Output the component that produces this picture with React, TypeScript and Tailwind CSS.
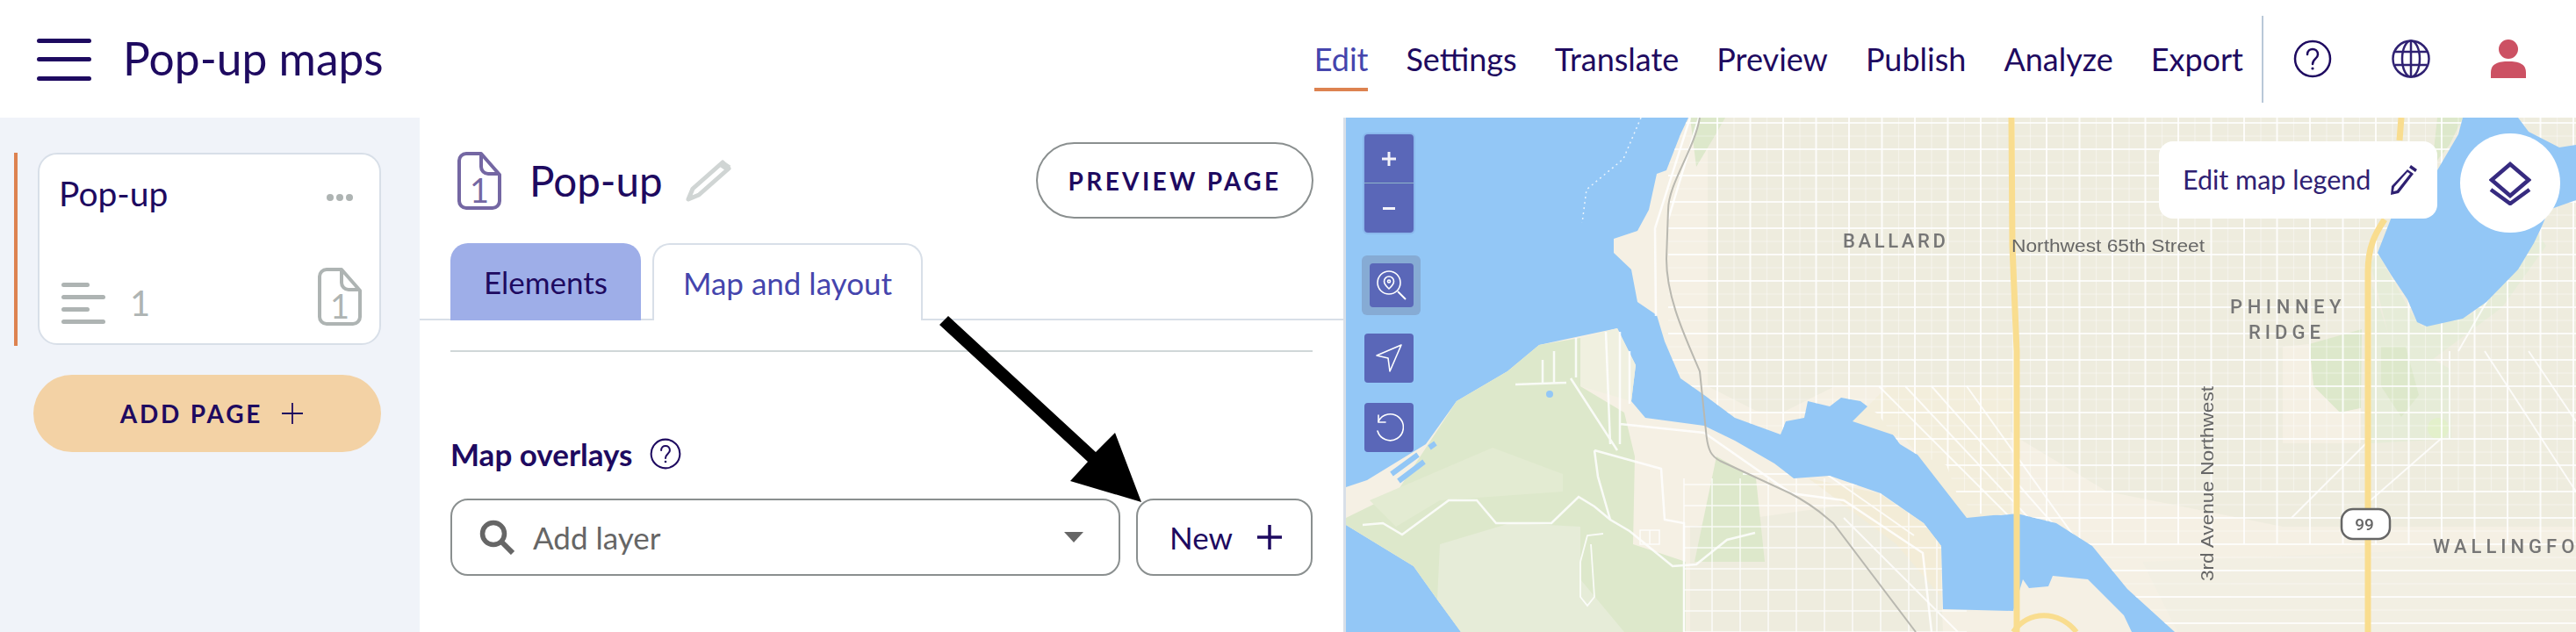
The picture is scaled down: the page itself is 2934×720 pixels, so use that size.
import React from "react";

const font = "font-['Lato','Open_Sans',sans-serif]";

const NAV = ["Settings", "Translate", "Preview", "Publish", "Analyze", "Export"];

function DocIcon({ className, color }: { className: string; color: string }) {
  return (
    <svg viewBox="0 0 50 66" className={`${className} overflow-visible`} fill="none" stroke={color} strokeWidth="4">
      <path d="M10 2h17l21 24v30a8 8 0 0 1-8 8H10a8 8 0 0 1-8-8V10a8 8 0 0 1 8-8z" strokeLinejoin="round" />
      <path d="M27 2v15a8 8 0 0 0 8 8h13" />
      <text x="25" y="58" textAnchor="middle" fontSize="38" fontFamily="Lato" fill={color} stroke="none">
        1
      </text>
    </svg>
  );
}

function HelpIcon({ className }: { className: string }) {
  return (
    <svg viewBox="0 0 44 44" className={className} fill="none" stroke="#1e0a60" strokeWidth="2.5">
      <circle cx="22" cy="22" r="20" />
      <path d="M16 17c0-4 3-6 6-6s6 2 6 6c0 5-6 5-6 11" strokeLinecap="round" />
      <circle cx="22" cy="33" r="1.6" fill="#1e0a60" stroke="none" />
    </svg>
  );
}

function MapSvg() {
  const north =
    "1923,134 1914,153 1898,194 1887,198 1878,239 1865,263 1838,272 1838,288 1858,307 1865,344 1887,359 1896,389 1914,431 1941,450 1976,476 2028,495 2034,480 2055,476 2059,457 2084,463 2097,453 2119,457 2139,472 2164,506 2182,517 2217,530 2230,566 2252,585 2279,587 2297,585 2342,596 2383,622 2423,671 2477,720 2934,720 2934,134";
  const south =
    "1533,555 1557,547 1624,506 1659,457 1717,423 1753,393 1842,374 1863,416 1858,457 1874,476 1941,485 1976,502 2021,528 2043,545 2084,542 2142,562 2191,596 2211,622 2213,694 2293,696 2304,660 2311,670 2333,668 2338,656 2378,660 2419,701 2428,720 1664,720 1637,683 1610,645 1533,598";
  const lake =
    "2805,134 2800,153 2776,194 2724,247 2708,288 2724,314 2742,341 2753,367 2764,372 2805,363 2832,344 2868,307 2886,277 2895,258 2903,239 2934,228 2934,165 2915,168 2880,150 2868,134";
  const vert = Array.from({ length: 28 }, (_, i) => 1956 + i * 37.5);
  const vertMinor = Array.from({ length: 28 }, (_, i) => 1975 + i * 37.5);
  const horiz = Array.from({ length: 20 }, (_, i) => 140 + i * 30);
  const horizMinor = Array.from({ length: 20 }, (_, i) => 155 + i * 30);
  const southV = Array.from({ length: 10 }, (_, i) => 1918 + i * 32);
  const southH = Array.from({ length: 8 }, (_, i) => 552 + i * 24);
  return (
    <svg viewBox="1533 134 1401 586" className="absolute inset-0 h-full w-full blur-[0.6px]" preserveAspectRatio="none">
      <defs>
        <clipPath id="north">
          <polygon points={north} />
        </clipPath>
        <clipPath id="south">
          <polygon points={south} />
        </clipPath>
      </defs>
      <rect x="1533" y="134" width="1401" height="586" fill="#93c7f6" />
      <polygon points={north} fill="#f5f0e4" />
      <polygon points={south} fill="#f5f0e4" />
      <polygon
        points="1945,134 1945,440 2000,468 2030,470 2090,440 2230,440 2300,500 2400,560 2600,600 2934,600 2934,134"
        fill="#eeecde"
      />
      <polygon points="2110,480 2170,500 2240,590 2290,585 2290,440 2150,440" fill="#f3eedc" />
      <polygon points="2440,640 2934,620 2934,720 2480,720" fill="#f2efe3" />
      <polygon points="1925,600 2140,570 2210,640 2213,720 1925,720" fill="#eeecde" />
      <polygon points="2060,545 2140,562 2191,596 2211,622 2211,680 2160,620" fill="#f3ecd7" />
      <polygon
        points="1590,562 1659,457 1717,423 1753,393 1800,385 1800,440 1850,470 1862,520 1860,620 1920,640 1920,720 1664,720 1637,683 1610,645 1533,598 1533,590"
        fill="#dde8cb"
      />
      <polygon points="1640,620 1720,596 1800,600 1800,660 1850,720 1664,720 1637,683" fill="#e6ecd8" />
      <polygon points="1560,570 1700,510 1780,540 1780,560 1640,570 1590,600" fill="#e3ebd2" />
      <polygon points="1800,385 1842,374 1863,416 1858,457 1800,440" fill="#f0f0e0" />
      <polygon points="1925,134 1965,134 1950,160 1932,190" fill="#dde8cb" />
      <polygon points="1955,520 2000,545 2010,640 1930,640" fill="#dde8cb" />
      <polygon points="2630,392 2690,375 2689,465 2665,470 2635,440" fill="#dde8cb" />
      <polygon points="2600,395 2630,392 2635,440 2665,470 2689,465 2689,505 2600,505" fill="#f5f0e4" />
      <polygon points="2702,325 2720,380 2790,420 2792,500 2700,505" fill="#e6ecd8" />
      <polygon points="2712,395 2740,395 2755,450 2735,475 2712,440" fill="#dde8cb" />
      <circle cx="2777" cy="488" r="12" fill="#e3f0cb" />
      <polygon points="2792,134 2805,134 2790,165 2770,190 2776,134" fill="#dde8cb" />
      <polygon points="2700,300 2735,250 2708,288 2746,356 2758,372 2814,359 2868,307 2890,265 2900,280 2850,350 2770,410 2720,380" fill="#e6ecd8" />

      <g clipPath="url(#north)" stroke="#ffffff">
        {vert.map((x) => (
          <line key={x} x1={x} y1="134" x2={x} y2="620" strokeWidth="2" opacity="0.85" />
        ))}
        {vertMinor.map((x) => (
          <line key={x} x1={x} y1="134" x2={x} y2="560" strokeWidth="1.2" opacity="0.4" />
        ))}
        {horiz.map((y) => (
          <line key={y} x1="1900" y1={y} x2="2934" y2={y} strokeWidth="2" opacity="0.8" />
        ))}
        {horizMinor.map((y) => (
          <line key={y} x1="1900" y1={y} x2="2934" y2={y} strokeWidth="1.2" opacity="0.4" />
        ))}
        <path
          d="M2140 440 2290 590M2170 440 2320 600M2200 440 2350 610M2240 440 2440 720M2700 500 2610 590M2780 500 2700 570M2800 400 2880 260M2790 400 2790 500M2830 400 2934 560M2880 400 2934 480"
          fill="none"
          strokeWidth="2"
          opacity="0.8"
        />
      </g>
      <g clipPath="url(#south)" stroke="#ffffff" opacity="0.8">
        {southV.map((x) => (
          <line key={x} x1={x} y1="545" x2={x} y2="720" strokeWidth="1.5" />
        ))}
        {southH.map((y) => (
          <line key={y} x1="1918" y1={y} x2="2240" y2={y} strokeWidth="1.5" />
        ))}
        <path d="M1985 540 2080 540 2180 610M2100 590 2230 720" fill="none" strokeWidth="2" />
      </g>
      <g fill="none" stroke="#ffffff" strokeWidth="2.5" opacity="0.85">
        <path d="M1552 598 1575 596 1597 609 1650 570 1682 570 1704 596 1767 596 1798 566 1816 577 1834 592 1856 605 1905 645 1932 643 1967 615 1999 607" />
        <path d="M1816 513 1820 543 1834 592M1816 513 1892 534 1896 592 1918 596 1918 720" />
        <path d="M1789 431 1842 513M1726 438 1784 436M1845 483 1941 493M1829 378 1834 506M1845 378 1845 506" />
        <path d="M1757 410 1757 436M1770 400 1770 436M1795 385 1795 430M1856 460 1856 400" />
        <path d="M1941 493 2040 562 2100 570 2190 630 2200 720" />
        <path d="M1868 620 1890 620 1890 604 1868 604zM1879 604 1879 620" strokeWidth="1.5" />
        <path d="M1800 640 1808 610 1826 608M1800 640 1800 680 1808 690 1816 680 1812 620" strokeWidth="1.8" />
        <path d="M1900 250 1935 134M1885 260 1925 134M1886 360 1885 260" />
      </g>
      <polygon points={lake} fill="#93c7f6" />
      <path d="M1869 134 1849 181 1807 216 1802 254" fill="none" stroke="#ffffff" strokeWidth="1.5" strokeDasharray="2 4" opacity="0.8" />
      <ellipse cx="1765" cy="449" rx="4" ry="4" fill="#93c7f6" />
      <path d="M1585 540 1615 518M1593 548 1622 526M1628 510 1635 505" stroke="#93c7f6" strokeWidth="6" fill="none" />
      <path
        d="M1936 134C1930 170 1900 210 1900 239L1898 295C1898 340 1920 385 1936 423L1943 491C1945 515 1950 520 1959 525L2039 562C2070 578 2080 590 2088 596L2182 720"
        fill="none"
        stroke="#b9b8b0"
        strokeWidth="2"
      />
      <g fill="none" stroke="#f9dd8f" strokeWidth="7">
        <path d="M2291 134 2292 280 2297 400 2297 720" />
        <path d="M2735 134 2733 160" />
        <path d="M2716 250C2706 265 2697 280 2697 310L2697 720" />
        <path d="M2293 720C2310 695 2345 695 2365 720" strokeWidth="6" />
      </g>
      <g fill="#767676" fontFamily="Roboto, sans-serif" fontWeight="500">
        <text x="2099" y="282" fontSize="22" letterSpacing="3.6">
          BALLARD
        </text>
        <text x="2540" y="357" fontSize="22" letterSpacing="5.6">
          PHINNEY
        </text>
        <text x="2561" y="386" fontSize="22" letterSpacing="5">
          RIDGE
        </text>
        <text x="2771" y="630" fontSize="22" letterSpacing="5">
          WALLINGFORD
        </text>
      </g>
      <g fill="#666666" fontFamily="Liberation Sans, sans-serif">
        <text x="2291" y="287" fontSize="20.5" textLength="220" lengthAdjust="spacingAndGlyphs">
          Northwest 65th Street
        </text>
        <text
          x="0"
          y="0"
          fontSize="20.5"
          textLength="222"
          lengthAdjust="spacingAndGlyphs"
          transform="translate(2521 662) rotate(-90)"
        >
          3rd Avenue Northwest
        </text>
      </g>
      <rect x="2667" y="580" width="55" height="34" rx="13" fill="#ffffff" stroke="#666666" strokeWidth="2.5" />
      <text x="2693" y="604" fontSize="19" textAnchor="middle" fill="#666666" fontFamily="Roboto, sans-serif" fontWeight="500">
        99
      </text>
    </svg>
  );
}

function MapControls() {
  const box = "flex items-center justify-center bg-[#5a67b8] rounded-[4px] w-[56px] text-white";
  return (
    <div className="absolute left-[21px] top-[19px] flex flex-col items-start">
      <div className="flex w-[56px] flex-col overflow-hidden rounded-[4px] shadow-[0_0_0_2px_rgba(90,103,184,0.15)]">
        <div className="flex h-[56px] items-center justify-center border-b border-[#8fb5c9] bg-[#5a67b8]">
          <svg viewBox="0 0 20 20" className="h-[20px] w-[20px]" stroke="#f4f4fa" strokeWidth="3">
            <path d="M10 2v16M2 10h16" />
          </svg>
        </div>
        <div className="flex h-[56px] items-center justify-center bg-[#5a67b8]">
          <div className="h-[3px] w-[14px] bg-[#f4f4fa]" />
        </div>
      </div>
      <div className="ml-[-3px] mt-[26px] rounded-[6px] bg-[#86abd4] p-[9px] pr-[8px]">
        <div className="flex h-[50px] w-[50px] items-center justify-center rounded-[4px] bg-[#5a67b8]">
          <svg viewBox="0 0 36 36" className="h-[36px] w-[36px]" fill="none" stroke="#ffffff" strokeWidth="1.6">
            <circle cx="15" cy="15" r="13" />
            <path d="M25 25l9 9" strokeWidth="2" />
            <path d="M15 8a5.5 5.5 0 0 1 5.5 5.5C20.5 17 15 22 15 22s-5.5-5-5.5-8.5A5.5 5.5 0 0 1 15 8z" />
            <circle cx="15" cy="13.5" r="1.5" />
          </svg>
        </div>
      </div>
      <div className={`${box} mt-[21px] h-[56px]`}>
        <svg viewBox="0 0 32 34" className="h-[34px] w-[32px]" fill="none" stroke="#ffffff" strokeWidth="1.6" strokeLinejoin="round">
          <path d="M30 2 2 14l13 3 2 15z" />
        </svg>
      </div>
      <div className={`${box} mt-[23px] h-[56px]`}>
        <svg viewBox="0 0 34 34" className="h-[34px] w-[34px]" fill="none" stroke="#ffffff" strokeWidth="1.6" strokeLinecap="round">
          <path d="M5 10a15 15 0 1 1-1 11" />
          <path d="M5 3v8h8" />
        </svg>
      </div>
    </div>
  );
}

export default function App() {
  return (
    <div className={`${font} relative flex h-[720px] w-[2934px] flex-col overflow-hidden bg-white text-[#1e0a60]`}>
      <header className="flex h-[134px] items-center">
        <svg viewBox="0 0 62 50" className="ml-[42px] h-[50px] w-[62px]" fill="#1e0a60">
          <rect y="2" width="62" height="5" rx="2.5" />
          <rect y="23" width="62" height="5" rx="2.5" />
          <rect y="45" width="62" height="5" rx="2.5" />
        </svg>
        <h1 className="ml-[36px] text-[51.5px] leading-none">Pop-up maps</h1>
        <nav className="ml-auto flex h-full items-center text-[36px]">
          <div className="relative flex h-full items-center text-[#4545ad]">
            Edit
            <div className="absolute bottom-[30px] left-0 right-0 h-[4px] bg-[#dd8250]" />
          </div>
          {NAV.map((item) => (
            <span key={item} className="ml-[43px]">
              {item}
            </span>
          ))}
        </nav>
        <div className="ml-[21px] h-[99px] w-[2px] bg-[#b9c8d8]" />
        <HelpIcon className="ml-[34px] h-[44px] w-[44px]" />
        <svg viewBox="0 0 44 44" className="ml-[68px] h-[44px] w-[44px]" fill="none" stroke="#2f2172" strokeWidth="2.5">
          <circle cx="22" cy="22" r="20.5" />
          <ellipse cx="22" cy="22" rx="10" ry="20.5" />
          <path d="M22 2v40M4 14h36M4 29h36" />
        </svg>
        <svg viewBox="0 0 40 44" className="ml-[69px] mr-[57px] h-[44px] w-[40px]" fill="#cc5163">
          <ellipse cx="20" cy="11" rx="11" ry="11" />
          <path d="M0 44V38C0 27 9 25 20 25s20 2 20 13v6z" />
        </svg>
      </header>

      <div className="flex min-h-0 flex-1">
        <aside className="flex w-[478px] flex-col bg-[#f0f3f9] pl-[16px] pt-[40px]">
          <div className="flex h-[220px] border-l-[4px] border-[#dd8250]">
            <div className="ml-[23px] flex h-[219px] w-[391px] flex-col rounded-[22px] border-2 border-[#d8dfe8] bg-white pb-[20px] pl-[22px] pr-[20px] pt-[22px]">
              <div className="flex items-center justify-between">
                <span className="text-[39px] leading-[44px]">Pop-up</span>
                <div className="mr-[10px] mt-[10px] flex gap-[3px]">
                  <i className="h-[8px] w-[8px] rounded-full bg-[#aeb4b3]" />
                  <i className="h-[8px] w-[8px] rounded-full bg-[#aeb4b3]" />
                  <i className="h-[8px] w-[8px] rounded-full bg-[#aeb4b3]" />
                </div>
              </div>
              <div className="mt-auto flex items-end">
                <div className="ml-[3px] flex flex-col gap-[9px] pb-[2px]">
                  <i className="h-[5px] w-[32px] rounded-full bg-[#aeb4b3]" />
                  <i className="h-[5px] w-[50px] rounded-full bg-[#aeb4b3]" />
                  <i className="h-[5px] w-[32px] rounded-full bg-[#aeb4b3]" />
                  <i className="h-[5px] w-[50px] rounded-full bg-[#aeb4b3]" />
                </div>
                <span className="ml-[28px] pb-[4px] text-[40px] leading-[44px] text-[#aeb4b3]">1</span>
                <DocIcon className="ml-auto h-[66px] w-[50px]" color="#aeb4b3" />
              </div>
            </div>
          </div>
          <button className="ml-[22px] mt-[33px] flex h-[88px] w-[396px] items-center justify-center rounded-full bg-[#f3d2a5] pl-[10px] text-[28px] font-bold tracking-[0.1em]">
            ADD PAGE
            <svg viewBox="0 0 24 24" className="ml-[22px] h-[24px] w-[24px]" stroke="#1e0a60" strokeWidth="1.8">
              <path d="M12 0v24M0 12h24" />
            </svg>
          </button>
        </aside>

        <main className="flex w-[1055px] flex-col border-r-[3px] border-[#d8dfe8] pt-[28px]">
          <div className="flex h-[87px] items-center pl-[43px] pr-[34px]">
            <DocIcon className="h-[66px] w-[50px]" color="#7467a3" />
            <span className="ml-[32px] text-[47.5px] leading-none">Pop-up</span>
            <svg viewBox="0 0 52 48" className="ml-[26px] h-[48px] w-[52px]" fill="none" stroke="#d0d5d4" strokeWidth="5" strokeLinejoin="round">
              <path d="M42 3 8 33 3 45l12-5L49 10z" />
              <path d="M40 4l9 6" strokeWidth="8" />
            </svg>
            <button className="ml-auto flex h-[87px] w-[316px] items-center justify-center rounded-full border-2 border-[#8a8f8f] text-[28px] font-bold tracking-[0.12em]">
              PREVIEW PAGE
            </button>
          </div>
          <div className="mt-[28px] flex h-[88px] gap-[13px] border-b-2 border-[#d8dfe8] pl-[35px]">
            <div className="flex h-[88px] w-[217px] items-center justify-center rounded-t-[20px] bg-[#9eaee8] text-[35px]">
              Elements
            </div>
            <div className="flex h-[88px] w-[308px] items-center justify-center rounded-t-[20px] border-2 border-b-0 border-[#d8dfe8] bg-white text-[35px] text-[#4545ad]">
              Map and layout
            </div>
          </div>
          <div className="mx-[35px] mt-[34px] h-[2px] bg-[#d0d7d8]" />
          <div className="ml-[35px] mt-[97px] flex items-center">
            <span className="text-[35px] font-bold leading-[38px]">Map overlays</span>
            <HelpIcon className="ml-[20px] h-[36px] w-[36px]" />
          </div>
          <div className="mx-[35px] mt-[32px] flex gap-[18px]">
            <div className="flex h-[88px] w-[764px] items-center rounded-[20px] border-2 border-[#8a8f8f] pl-[31px] pr-[40px]">
              <svg viewBox="0 0 40 40" className="h-[40px] w-[40px]" fill="none" stroke="#666666">
                <circle cx="16" cy="16" r="12.5" strokeWidth="5.5" />
                <path d="M25 25 38 38" strokeWidth="6" />
              </svg>
              <span className="ml-[21px] text-[35px] text-[#666666]">Add layer</span>
              <div className="ml-auto h-0 w-0 border-x-[11px] border-t-[12px] border-x-transparent border-t-[#666666]" />
            </div>
            <button className="flex h-[88px] w-[201px] items-center justify-center rounded-[20px] border-2 border-[#8a8f8f] pl-[3px] text-[35px]">
              New
              <svg viewBox="0 0 28 28" className="ml-[28px] h-[28px] w-[28px]" stroke="#1e0a60" strokeWidth="3.5">
                <path d="M14 0v28M0 14h28" />
              </svg>
            </button>
          </div>
        </main>

        <section className="relative flex-1 overflow-hidden bg-[#93c7f6]">
          <MapSvg />
          <MapControls />
          <div className="absolute left-[926px] top-[27px] flex h-[88px] w-[317px] items-center rounded-[16px] bg-white pl-[27px] text-[30.5px] text-[#2f2172]">
            Edit map legend
            <svg viewBox="0 0 30 34" className="ml-[23px] h-[34px] w-[30px]" fill="#2f2172">
              <path d="M23 0l7 5-2 3-7-5zM19 5l7 5L9 32l-9 2 1-10zM4 25l-1 5 4-1 15-19-3-2z" fillRule="evenodd" />
            </svg>
          </div>
          <div className="absolute left-[1269px] top-[18px] flex h-[113px] w-[114px] items-center justify-center rounded-full bg-white">
            <svg viewBox="0 0 48 50" className="h-[50px] w-[48px]" fill="none" stroke="#372b80" strokeWidth="4.5">
              <path d="M24 3 45 21 24 39 3 21z" />
              <path d="M2 32l22 16 22-16" />
            </svg>
          </div>
        </section>
      </div>

      <svg viewBox="0 0 2934 720" className="pointer-events-none absolute inset-0 h-[720px] w-[2934px]">
        <polygon points="1080,360 1248,515 1270,493 1300,572 1219,548 1239,526 1070,370" fill="#000000" />
      </svg>
    </div>
  );
}
